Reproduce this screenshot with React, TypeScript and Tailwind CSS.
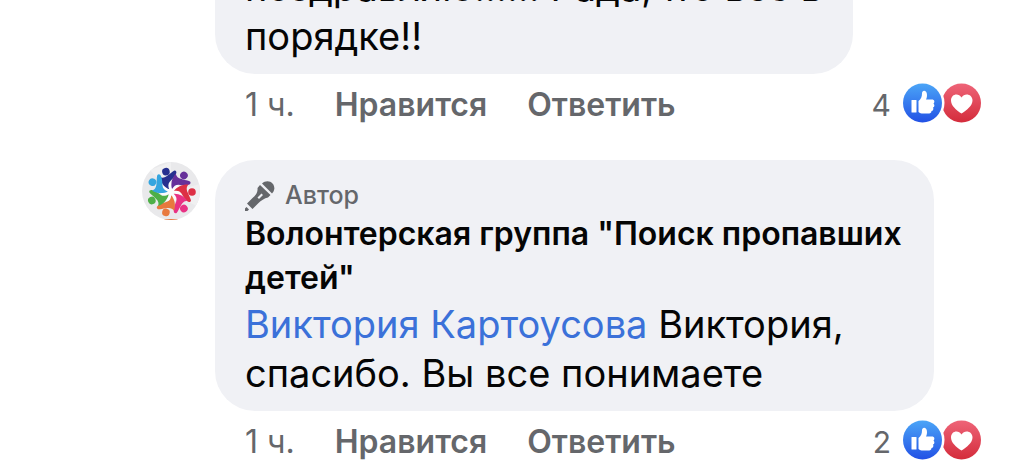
import React from "react";

const FIGURES = [
    { color: "#26308f", angle: -14 },
    { color: "#67309a", angle: 38 },
    { color: "#dd3045", angle: 90 },
    { color: "#e83284", angle: 142 },
    { color: "#e8793e", angle: 194 },
    { color: "#4eaf47", angle: 246 },
    { color: "#35a5df", angle: 298 },
];

function GroupAvatar() {
    return (
        <svg viewBox="0 0 58 58" className="mt-[2px] size-[58px] shrink-0 rounded-full" role="img">
            <rect width="58" height="58" fill="#e9e9eb" />
            <path d="M29 30 8 8 29 0ZM29 30 58 22V46Z" fill="#f0f0f1" />
            <circle cx="29" cy="30" r="10" fill="#fbfbfc" />
            {FIGURES.map((figure) => (
                <g key={figure.color} fill={figure.color} transform={`translate(29 30) rotate(${figure.angle})`}>
                    <circle cx="0" cy="-21" r="3.8" />
                    <path d="M-7.500-17.500C-5-15-2-15.500 1-17 4-18 6-19.500 8.500-20 10.500-19.500 10.500-17.500 9-16 7-13.500 4-12 1.500-10.500-1-8.500-1.500-6.500-1-3-5.500-6-8-12-7.500-17.500Z" />
                </g>
            ))}
            <path d="M21 57h16v1H21Z" fill="#e8793e" />
        </svg>
    );
}

function MicIcon() {
    return (
        <svg viewBox="0 0 30 30" className="size-[30px]" fill="#65676b" aria-hidden="true">
            <path d="M17 2.500C20-.500 25-.500 27.500 2.500S30 9.500 27 12.500Z" />
            <path d="M15 4 25.500 14 23 16.500C19.500 17 16 19.500 12.500 23L7.500 28 2 22.500 7.500 17C11 14 13 11 12.500 7ZM16.500 12.500 12.500 16.500 14 18 18 14Z" fillRule="evenodd" />
            <path d="M1.500 26 4 28.500 2.500 30H0V27.500Z" />
        </svg>
    );
}

function Reactions({ count, id }: { count: number; id: string }) {
    return (
        <div className="ml-auto flex items-center text-[30px]">
            <span className="mr-3">{count}</span>
            <svg viewBox="0 0 78 44" className="h-11 w-[78px]" aria-hidden="true">
                <defs>
                    <linearGradient id={`like-${id}`} x2="0" y2="1">
                        <stop stopColor="#4ba5f7" />
                        <stop offset="1" stopColor="#2251e5" />
                    </linearGradient>
                    <linearGradient id={`love-${id}`} x2="0" y2="1">
                        <stop stopColor="#ee6478" />
                        <stop offset="1" stopColor="#d42c3b" />
                    </linearGradient>
                </defs>
                <circle cx="58.500" cy="20" r="19.500" fill={`url(#love-${id})`} />
                <circle cx="19.500" cy="20" r="22" fill="white" />
                <circle cx="19.500" cy="20" r="19.500" fill={`url(#like-${id})`} />
                <rect x="8.500" y="17" width="5" height="12.500" rx="0.500" fill="white" />
                <path d="M15.500 18C18 16 19 13.500 19 10.500 19 6.500 24 7 24 12 24 14 23.500 15.500 23 16.500H29C31.500 16.500 32 19 30.500 20.500 32 22 31.500 24 30 24.500 31 26 30 28 28.500 28 28.500 30 27 30.500 25 30.500H20C18 30.500 17 30 15.500 29Z" fill="white" />
                <path d="M58.500 30.500C53 27 48 22.500 48 17.500 48 11 55.500 9.500 58.500 14.500 61.500 9.500 69.500 11 69.500 17.500 69.500 22.500 64 27 58.500 30.500Z" fill="white" />
            </svg>
        </div>
    );
}

function CommentActions({ count, id }: { count: number; id: string }) {
    return (
        <div className="flex h-[62px] items-center pl-[30px] text-[32px] text-[#65676b]">
            <span className="mr-10">1 ч.</span>
            <button className="mr-10 font-semibold">Нравится</button>
            <button className="font-semibold">Ответить</button>
            <Reactions count={count} id={id} />
        </div>
    );
}

export default function App() {
    return (
        <main className="min-h-screen overflow-hidden bg-white pr-[29px] pl-[142px] font-['Inter','Noto_Sans',sans-serif] text-[#050505]">
            {/* Previous comment, scrolled partly out of view */}
            <article className="-mt-[50px] pl-[73px]">
                <div className="w-fit max-w-[638px] rounded-[40px] bg-[#f0f1f5] py-[13px] pr-6 pl-[30px] text-[38px] leading-[49px]">
                    <p>поздравляю!!!!!! Рада,что все в порядке!!</p>
                </div>
                <CommentActions count={4} id="first" />
            </article>

            <article className="mt-6 flex gap-[15px]">
                <GroupAvatar />
                <div className="min-w-0 flex-1">
                    <div className="w-fit max-w-[719px] rounded-[40px] bg-[#f0f1f5] px-[30px] pt-5 pb-[13px]">
                        <div className="flex h-8 items-center gap-[10px] text-[25px] font-medium text-[#65676b]">
                            <MicIcon />
                            <span>Автор</span>
                        </div>
                        <h2 className="text-[32px] leading-[44px] font-semibold">
                            Волонтерская группа "Поиск пропавших детей"
                        </h2>
                        <p className="text-[38px] leading-[49px]">
                            <a href="#" className="text-[#3b71d9]">Виктория Картоусова</a> Виктория, спасибо. Вы все понимаете
                        </p>
                    </div>
                    <CommentActions count={2} id="second" />
                </div>
            </article>
        </main>
    );
}
